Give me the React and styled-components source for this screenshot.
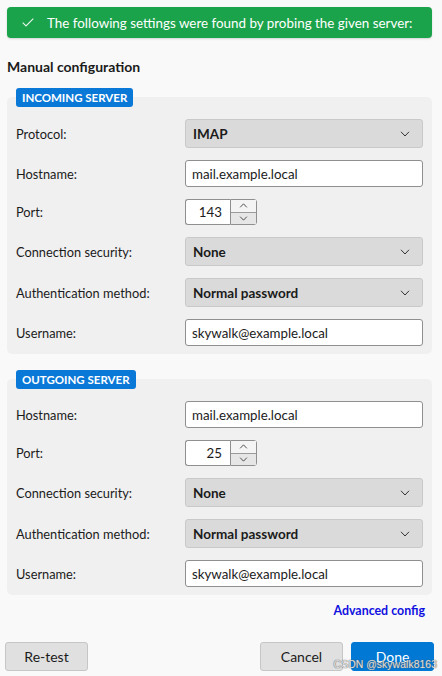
import React from "react";
import styled, { createGlobalStyle } from "styled-components";

const Global = createGlobalStyle`
  html, body { margin: 0; padding: 0; background: #f9f9f9; }
  body { font-family: Lato, "Noto Sans", sans-serif; color: #1b1b1b; }
  * { box-sizing: border-box; }
`;

const Page = styled.div`
  width: 442px;
  height: 676px;
  padding: 7px 10px 0 7px;
  display: flex;
  flex-direction: column;
  position: relative;
  overflow: hidden;
`;

const Banner = styled.div`
  height: 31px;
  background: #1ba34b;
  border-radius: 4px;
  box-shadow: 0 1px 2px rgba(0,0,0,0.15);
  display: flex;
  align-items: center;
  padding-left: 15px;
  gap: 13px;
  color: #fff;
  font-size: 13.4px;
  white-space: nowrap;
`;

const Heading = styled.div`
  font-weight: 700;
  font-size: 14px;
  margin-top: 20px;
  height: 18px;
  line-height: 18px;
`;

const Legend = styled.div`
  align-self: flex-start;
  margin-left: 9px;
  margin-top: ${p => p.$top}px;
  margin-bottom: -10px;
  height: 19px;
  padding: 0 6px;
  background: #0a78d7;
  color: #fff;
  font-weight: 700;
  font-size: 11.5px;
  line-height: 19px;
  border-radius: 3px;
  position: relative;
  z-index: 1;
`;

const Fieldset = styled.div`
  background: #f0f0f0;
  border-radius: 5px;
  padding: 22px 9px 8px 9px;
  display: flex;
  flex-direction: column;
  gap: 12px;
`;

const Row = styled.div`
  display: grid;
  grid-template-columns: 169px 1fr;
  align-items: center;
`;

const Label = styled.div`
  font-size: 12.8px;
`;

const Select = styled.div`
  height: 29px;
  background: #dadada;
  border: 1px solid #c9c9c9;
  border-radius: 3px;
  display: flex;
  align-items: center;
  justify-content: space-between;
  padding: 0 12px 0 7px;
  font-weight: 700;
  font-size: 13.5px;
`;

const Input = styled.div`
  height: 27px;
  background: #fff;
  border: 1px solid #8f8f8f;
  border-radius: 3px;
  display: flex;
  align-items: center;
  padding: 0 6px;
  font-size: 13.3px;
`;

const Spin = styled.div`
  display: flex;
  height: 26px;
  width: 72px;
`;

const SpinValue = styled.div`
  width: 45px;
  background: #fff;
  border: 1px solid #8f8f8f;
  border-right: none;
  border-radius: 3px 0 0 3px;
  display: flex;
  align-items: center;
  justify-content: flex-end;
  padding-right: 8px;
  font-size: 13.3px;
`;

const SpinButtons = styled.div`
  width: 27px;
  border: 1px solid #8f8f8f;
  border-radius: 0 3px 3px 0;
  display: flex;
  flex-direction: column;
  background: #f4f4f4;
`;

const SpinBtn = styled.div`
  flex: 1;
  display: flex;
  align-items: center;
  justify-content: center;
  background: ${p => (p.$down ? "#e6e6e6" : "#f4f4f4")};
  border-top: ${p => (p.$down ? "1px solid #9a9a9a" : "none")};
`;

const LinkRow = styled.div`
  display: flex;
  justify-content: flex-end;
  padding-right: 7px;
  margin-top: 7px;
`;

const Link = styled.a`
  color: #1010e0;
  font-weight: 700;
  font-size: 12.4px;
  line-height: 18px;
`;

const Buttons = styled.div`
  display: flex;
  margin: 22px -2px 0 -2px;
  gap: 8px;
`;

const Button = styled.div`
  width: 83px;
  height: 29px;
  border-radius: 3px;
  border: 1px solid ${p => (p.$primary ? "#0078d4" : "#c6c6c6")};
  background: ${p => (p.$primary ? "#0078d4" : "#e0e0e0")};
  color: ${p => (p.$primary ? "#fff" : "#1b1b1b")};
  display: flex;
  align-items: center;
  justify-content: center;
  font-size: 14px;
  margin-left: ${p => (p.$push ? "auto" : "0")};
`;

const Watermark = styled.div`
  position: absolute;
  right: 5px;
  bottom: 6px;
  font-family: "Liberation Sans", Arial, sans-serif;
  font-size: 10.5px;
  color: rgba(255,255,255,0.8);
  text-shadow: 0 0 1px #666, 0 0 1px #666;
`;

const Chevron = ({ up, w = 10, h = 6, color = "#333" }) => (
  <svg width={w} height={h} viewBox="0 0 10 6">
    <path
      d={up ? "M1 5.2 L5 1 L9 5.2" : "M1 0.8 L5 5 L9 0.8"}
      fill="none"
      stroke={color}
      strokeWidth="1"
    />
  </svg>
);

const Check = () => (
  <svg width="12" height="9" viewBox="0 0 12 9">
    <path d="M0.7 4.6 L4 7.9 L11.3 0.6" fill="none" stroke="#e8f6ec" strokeWidth="1.1" />
  </svg>
);

const SelectField = ({ value }) => (
  <Select>
    <span>{value}</span>
    <Chevron />
  </Select>
);

const PortField = ({ value }) => (
  <Spin>
    <SpinValue>{value}</SpinValue>
    <SpinButtons>
      <SpinBtn><Chevron up w={9} h={5} /></SpinBtn>
      <SpinBtn $down><Chevron w={9} h={5} /></SpinBtn>
    </SpinButtons>
  </Spin>
);

const Field = ({ label, children }) => (
  <Row>
    <Label>{label}</Label>
    {children}
  </Row>
);

export default function App() {
  return (
    <>
      <Global />
      <Page>
        <Banner>
          <Check />
          <span>The following settings were found by probing the given server:</span>
        </Banner>
        <Heading>Manual configuration</Heading>

        <Legend $top={12}>INCOMING SERVER</Legend>
        <Fieldset>
          <Field label="Protocol:"><SelectField value="IMAP" /></Field>
          <Field label="Hostname:"><Input>mail.example.local</Input></Field>
          <Field label="Port:"><PortField value="143" /></Field>
          <Field label="Connection security:"><SelectField value="None" /></Field>
          <Field label="Authentication method:"><SelectField value="Normal password" /></Field>
          <Field label="Username:"><Input>skywalk@example.local</Input></Field>
        </Fieldset>

        <Legend $top={16}>OUTGOING SERVER</Legend>
        <Fieldset>
          <Field label="Hostname:"><Input>mail.example.local</Input></Field>
          <Field label="Port:"><PortField value="25" /></Field>
          <Field label="Connection security:"><SelectField value="None" /></Field>
          <Field label="Authentication method:"><SelectField value="Normal password" /></Field>
          <Field label="Username:"><Input>skywalk@example.local</Input></Field>
        </Fieldset>

        <LinkRow>
          <Link>Advanced config</Link>
        </LinkRow>

        <Buttons>
          <Button>Re-test</Button>
          <Button $push>Cancel</Button>
          <Button $primary>Done</Button>
        </Buttons>
        <Watermark>CSDN @skywalk8163</Watermark>
      </Page>
    </>
  );
}
